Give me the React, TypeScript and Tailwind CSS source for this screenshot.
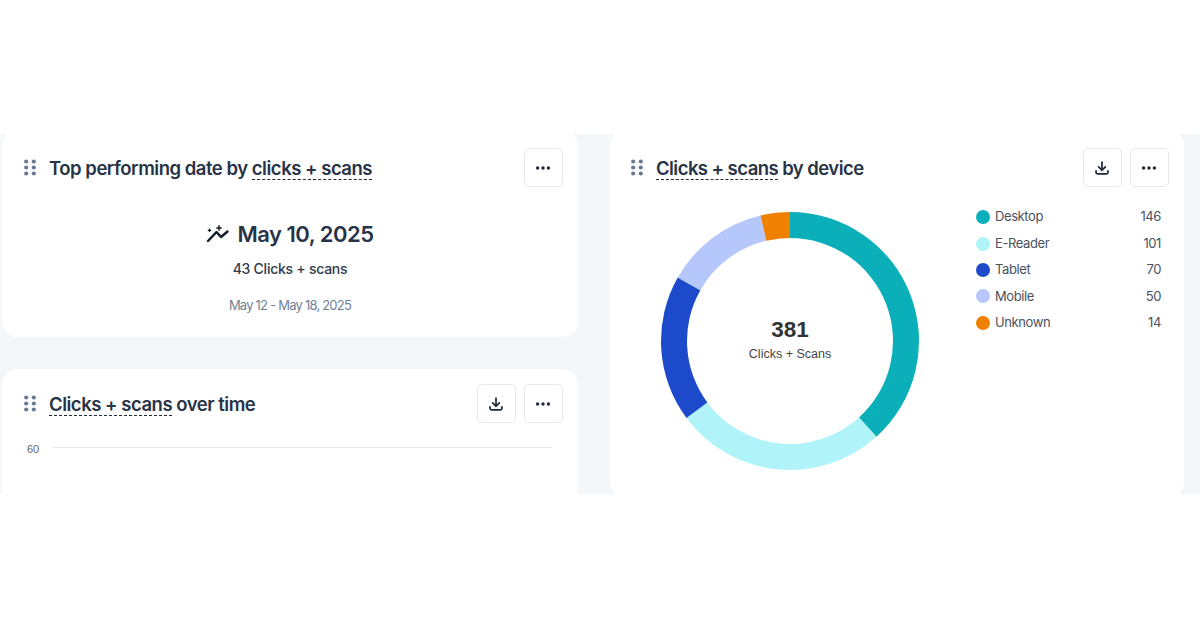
import React from "react";

const Grip = () => (
  <svg width="12" height="17" viewBox="0 0 12 17" className="shrink-0" fill="#6a7893">
    {[2.5, 8.5, 14.5].map((y) =>
      [2.2, 9.8].map((x) => <circle key={`${x}-${y}`} cx={x} cy={y} r="2.1" />)
    )}
  </svg>
);

const Dots = () => (
  <svg width="16" height="16" viewBox="0 0 16 16" fill="#1f2937" className="-ml-[2px]">
    <circle cx="2.6" cy="8" r="1.7" />
    <circle cx="8" cy="8" r="1.7" />
    <circle cx="13.4" cy="8" r="1.7" />
  </svg>
);

const Download = () => (
  <svg width="14" height="14" viewBox="0 0 16 16" fill="none" stroke="#1f2937" strokeWidth="2" className="-ml-[1px]">
    <path d="M8 0.5v9.5" />
    <path d="M3.6 6.2 8 10.6l4.4-4.4" />
    <path d="M1.2 10.5v2.4c0 1 .7 1.7 1.6 1.7h10.4c.9 0 1.6-.7 1.6-1.7v-2.4" />
  </svg>
);

const IconBtn = ({ children }: { children: React.ReactNode }) => (
  <button className="flex h-[39px] w-[39px] items-center justify-center rounded-[5px] border border-[#e6e8ec] bg-white">
    {children}
  </button>
);

const Dashed = ({ children }: { children: React.ReactNode }) => (
  <span className="border-b border-dashed border-[#1f2937]">{children}</span>
);

const Header = ({ title, download, right }: { title: React.ReactNode; download?: boolean; right?: boolean }) => (
  <div className={right ? "flex h-[39px] items-center pl-[21px] pr-[15px]" : "flex h-[39px] items-center pl-[22px] pr-[15px]"}>
    <Grip />
    <h2 className={right ? "ml-[13px] text-[18.5px] leading-[24px] font-semibold tracking-[-0.55px] text-[#273347]" : "ml-[13px] text-[18.5px] leading-[24px] font-semibold tracking-[-0.48px] text-[#273347]"}>{title}</h2>
    <div className="ml-auto flex gap-2">
      {download && (
        <IconBtn>
          <Download />
        </IconBtn>
      )}
      <IconBtn>
        <Dots />
      </IconBtn>
    </div>
  </div>
);

const data = [
  { label: "Desktop", value: 146, color: "#0aafb9" },
  { label: "E-Reader", value: 101, color: "#b0f4fa" },
  { label: "Tablet", value: 70, color: "#1d4aca" },
  { label: "Mobile", value: 50, color: "#b6c7fc" },
  { label: "Unknown", value: 14, color: "#f08000" },
];

const Donut = () => {
  const total = 381;
  const R = 129;
  const r = 103;
  const c = 130;
  let acc = 0;
  const pt = (rad: number, a: number) =>
    `${(c + rad * Math.sin(a)).toFixed(2)} ${(c - rad * Math.cos(a)).toFixed(2)}`;
  return (
    <svg width="260" height="260" viewBox="0 0 260 260">
      {data.map((d) => {
        const a0 = (acc / total) * Math.PI * 2;
        acc += d.value;
        const a1 = (acc / total) * Math.PI * 2;
        const large = a1 - a0 > Math.PI ? 1 : 0;
        return (
          <path
            key={d.label}
            fill={d.color}
            d={`M${pt(R, a0)}A${R} ${R} 0 ${large} 1 ${pt(R, a1)}L${pt(r, a1)}A${r} ${r} 0 ${large} 0 ${pt(r, a0)}Z`}
          />
        );
      })}
    </svg>
  );
};

export default function App() {
  return (
    <div className="h-[628px] w-[1200px] bg-white font-['Inter',sans-serif]">
      <div className="h-[134px]" />
      <div className="h-[360px] overflow-hidden bg-[#f4f7fa]">
        <div className="-mt-[4px] ml-[2px] grid grid-cols-[576px_574px] gap-x-[32px]">
          <div className="flex flex-col gap-[32px]">
            <section className="h-[207px] rounded-[16px] bg-white pt-[18px]">
              <Header
                title={
                  <>
                    Top performing date by <Dashed>clicks + scans</Dashed>
                  </>
                }
              />
              <div className="mt-[32px] flex flex-col items-center">
                <div className="flex h-[30px] items-center gap-[8px]">
                  <svg width="23" height="18" viewBox="0 0 23 18" fill="none" stroke="#141b26" strokeWidth="2.4" strokeLinecap="round" strokeLinejoin="round">
                    <path d="M2 16 10.5 7l4.5 5 6.5-5.5" />
                    <path d="M3.5 4v2.6M2.2 5.3h2.6" strokeWidth="1.2" />
                    <path d="M13 0.8v4.4M10.8 3h4.4" strokeWidth="1.5" />
                  </svg>
                  <span className="text-[22px] leading-[30px] font-semibold tracking-[-0.5px] text-[#273347]">May 10, 2025</span>
                </div>
                <div className="mt-[10px] text-[14px] leading-[20px] font-medium tracking-[-0.25px] text-[#2f3a4c]">43 Clicks + scans</div>
                <div className="mt-[16px] text-[13px] leading-[20px] tracking-[-0.78px] text-[#717f97]">May 12 - May 18, 2025</div>
              </div>
            </section>
            <section className="h-[160px] rounded-[16px] bg-white pt-[15px]">
              <Header
                title={
                  <>
                    <Dashed>Clicks + scans</Dashed> over time
                  </>
                }
                download
              />
              <div className="mt-[15px] flex items-center pl-[25px] pr-[26px]">
                <span className="w-[26px] pt-[4px] font-['Liberation_Sans',sans-serif] text-[11px] leading-[14px] text-[#666666]">60</span>
                <div className="h-px flex-1 bg-[#e8e9ec]" />
              </div>
            </section>
          </div>
          <section className="h-[368px] rounded-[16px] bg-white pt-[18px]">
            <Header
              right
              title={
                <>
                  <Dashed>Clicks + scans</Dashed> by device
                </>
              }
              download
            />
            <div className="mt-[24px] flex items-start pl-[50px]">
              <div className="relative h-[260px] w-[260px]">
                <Donut />
                <div className="absolute inset-0 flex flex-col items-center justify-center pb-[4px] font-['Liberation_Sans',sans-serif]">
                  <span className="text-[22.5px] leading-[26px] font-bold text-[#333333]">381</span>
                  <span className="mt-[3px] text-[12.5px] leading-[16px] text-[#444444]">Clicks + Scans</span>
                </div>
              </div>
              <ul className="-mt-[7px] ml-[56px] w-[185px]">
                {data.map((d) => (
                  <li key={d.label} className="flex h-[26.4px] items-center text-[13px] tracking-[-0.4px] text-[#4a5262]">
                    <span className="h-[14px] w-[14px] rounded-full" style={{ backgroundColor: d.color }} />
                    <span className="ml-[5px]">{d.label}</span>
                    <span className="ml-auto">{d.value}</span>
                  </li>
                ))}
              </ul>
            </div>
          </section>
        </div>
      </div>
    </div>
  );
}
